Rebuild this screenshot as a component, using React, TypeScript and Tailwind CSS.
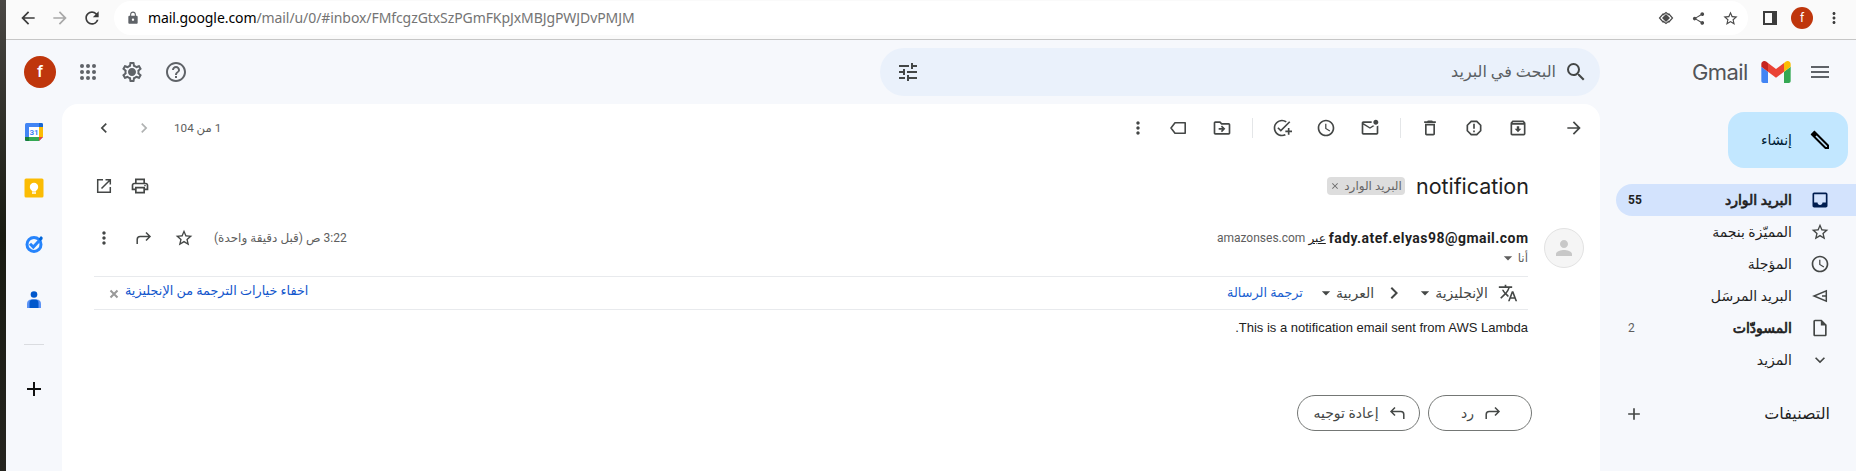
import React from 'react';
import {
  MdArrowBack, MdArrowForward, MdRefresh, MdLock, MdOutlineSettings, MdHelpOutline, MdTune, MdSearch,
  MdMenu, MdInbox, MdStarBorder, MdAccessTime, MdOutlineInsertDriveFile, MdKeyboardArrowDown, MdAdd,
  MdMoreVert, MdOutlinePrint, MdTranslate, MdArrowDropDown, MdPerson, MdShare,
  MdOutlineArchive, MdOutlineDelete, MdAddTask, MdOutlineDriveFileMove, MdOutlineMarkEmailUnread,
  MdReportGmailerrorred, MdChevronLeft, MdChevronRight, MdClose,
} from 'react-icons/md';

type SlotProps = { w: string; children: React.ReactNode };

function Slot({ w, children }: SlotProps) {
  return <div className={`${w} flex shrink-0 items-center justify-center`}>{children}</div>;
}

function ArrowTurn({ className }: { className: string }) {
  return (
    <svg viewBox="0 0 20 20" className={className} fill="none" stroke="currentColor" strokeWidth="1.5">
      <path d="M3.200 16V11.500Q3.200 8.500 6.200 8.500H16M12 4.500L16 8.500L12 12.500" />
    </svg>
  );
}

function LabelIcon() {
  return (
    <svg viewBox="0 0 20 20" className="size-5" fill="none" stroke="currentColor" strokeWidth="1.6" strokeLinejoin="round">
      <path d="M7 4.8H17.2V15.2H7L3 10Z" />
    </svg>
  );
}

function OpenIcon() {
  return (
    <svg viewBox="0 0 20 20" className="size-5" fill="none" stroke="currentColor" strokeWidth="1.500">
      <path d="M9 3.700H3.700V16.300H16.300V11M11.500 3.700H16.300V8.500M16.300 3.700L7.500 12.500" />
    </svg>
  );
}

function GmailLogo() {
  return (
    <svg viewBox="52 42 88 66" className="h-[22px] w-[30px]">
      <path fill="#4285f4" d="M58 108h14V74L52 59v43c0 3.32 2.69 6 6 6" />
      <path fill="#34a853" d="M120 108h14c3.32 0 6-2.69 6-6V59l-20 15" />
      <path fill="#fbbc04" d="M120 48v26l20-15v-8c0-7.42-8.47-11.65-14.4-7.2" />
      <path fill="#ea4335" d="M72 74V48l24 18 24-18v26L96 92" />
      <path fill="#c5221f" d="M52 51v8l20 15V48l-5.6-4.2c-5.94-4.45-14.4-.22-14.4 7.2" />
    </svg>
  );
}

function BrowserBar() {
  return (
    <div className="flex h-10 shrink-0 border-b border-[#c6c6c6] bg-[#fafafa] pb-[2px] text-[#3c3c3c]">
      <div className="flex h-9 w-[108px] items-center pl-[6px]">
        <Slot w="w-8"><MdArrowBack className="size-5" /></Slot>
        <Slot w="w-8"><MdArrowForward className="size-5 text-[#a8a8a8]" /></Slot>
        <Slot w="w-8"><MdRefresh className="size-5" /></Slot>
      </div>
      <div className="mt-px flex h-[34px] w-[1634px] items-center rounded-full bg-white">
        <div className="ml-[11px] flex w-[15px] justify-center"><MdLock className="size-[14px] text-[#5f6368]" /></div>
        <div className="-mt-px ml-[8px] whitespace-nowrap font-['Noto_Sans',sans-serif] text-[14px] tracking-[-0.08px] text-[#747474]">
          <span className="text-black">mail.google.com</span>/mail/u/0/#inbox/FMfcgzGtxSzPGmFKpJxMBJgPWJDvPMJM
        </div>
        <div className="ml-auto flex pr-[2px] text-[#4a4a4a]">
          <Slot w="w-8">
            <svg viewBox="0 0 16 16" className="size-4" fill="none" stroke="currentColor" strokeWidth="1.200">
              <path d="M5.500 3.500L1.500 8l4 4.500M10.500 3.500L14.500 8l-4 4.500" />
              <path d="M8 4L12 8L8 12L4 8Z" fill="currentColor" stroke="none" />
              <path d="M5 5L8 2.500L11 5M5 11L8 13.500L11 11" />
            </svg>
          </Slot>
          <Slot w="w-8"><MdShare className="size-[15px]" /></Slot>
          <Slot w="w-8"><MdStarBorder className="size-[17px]" /></Slot>
        </div>
      </div>
      <div className="flex h-9 items-center pl-[6px]">
        <Slot w="w-8"><div className="h-[14px] w-[14px] border-2 border-r-[5px] border-[#3c3c3c]" /></Slot>
        <Slot w="w-8"><div className="flex size-[22px] items-center justify-center rounded-full bg-[#bf360c] font-['Roboto',sans-serif] text-[12px] text-white">f</div></Slot>
        <Slot w="w-8"><MdMoreVert className="size-[18px]" /></Slot>
      </div>
    </div>
  );
}

function Header() {
  return (
    <header className="flex h-16 shrink-0 items-center text-[#5f6368]">
      <div className="flex items-center pl-3">
        <Slot w="w-11"><div className="flex size-8 items-center justify-center rounded-full bg-[#bf360c] font-['Roboto',sans-serif] text-[17px] font-medium text-white">f</div></Slot>
        <div className="ml-1 flex">
          <Slot w="w-11">
            <svg viewBox="0 0 24 24" className="size-6" fill="currentColor">
              {[6, 12, 18].map((y) => [6, 12, 18].map((x) => <circle key={`${x}-${y}`} cx={x} cy={y} r="2" />))}
            </svg>
          </Slot>
          <Slot w="w-11">
            <span className="grid place-items-center">
              <MdOutlineSettings className="col-start-1 row-start-1 size-6" />
              <span className="col-start-1 row-start-1 size-[6px] rounded-full bg-[#5f6368]" />
            </span>
          </Slot>
          <Slot w="w-11"><MdHelpOutline className="size-6" /></Slot>
        </div>
      </div>
      <div className="ml-auto flex h-12 w-[720px] items-center justify-between rounded-3xl bg-[#eaf1fb] px-3 text-[#444746]">
        <div className="flex w-8 justify-center"><MdTune className="size-6" /></div>
        <div className="flex items-center">
          <div dir="rtl" className="mr-[8px] text-[16px] leading-6 text-[#5b5f63]">البحث في البريد</div>
          <MdSearch className="size-6" />
        </div>
      </div>
      <div className="flex w-64 items-center pl-[92px]">
        <div className="w-[57px] whitespace-nowrap font-['Inter',sans-serif] text-[22px] leading-6 tracking-[-0.6px] text-[#525458]">Gmail</div>
        <div className="ml-3"><GmailLogo /></div>
        <div className="ml-[17px]"><MdMenu className="size-6" /></div>
      </div>
    </header>
  );
}

function Rail() {
  return (
    <aside className="flex w-14 shrink-0 flex-col items-center pt-[18px]">
      <svg viewBox="0 0 20 20" className="size-5">
        <rect x="1" y="1" width="18" height="18" rx="1.500" fill="#4285f4" />
        <path d="M15 5h4v10h-4z" fill="#fbbc04" />
        <path d="M15 1h2.500A1.500 1.500 0 0 1 19 2.500V5h-4z" fill="#1967d2" />
        <path d="M5 15h10v4H5z" fill="#34a853" />
        <path d="M1 15h4v4H2.500A1.500 1.500 0 0 1 1 17.500z" fill="#188038" />
        <path d="M19 15v4h-4z" fill="#f6f8fc" />
        <path d="M15 15h4l-4 4z" fill="#ea4335" />
        <path d="M5 5h10v10H5z" fill="#fff" />
        <text x="10" y="13" textAnchor="middle" fontSize="8" fontWeight="700" fontFamily="Roboto, sans-serif" fill="#4285f4">31</text>
      </svg>
      <svg viewBox="0 0 20 20" className="mt-9 size-5">
        <rect x=".5" y=".5" width="19" height="19" rx="1.500" fill="#fbbc04" />
        <circle cx="10" cy="9" r="4.200" fill="#fff" />
        <path d="M8 11h4v2.500H8zM8 14.200h4v1.500H8z" fill="#fff" />
      </svg>
      <svg viewBox="0 0 20 20" className="mt-9 size-5">
        <circle cx="10" cy="10.400" r="7" fill="none" stroke="#2684fc" strokeWidth="3" />
        <path d="M6 9.700L9.300 13L17.500 4.300" fill="none" stroke="#2684fc" strokeWidth="3" />
        <path d="M14.500 5L17 2L19 4L16.500 7Z" fill="#0066da" />
      </svg>
      <svg viewBox="0 0 20 20" className="mt-9 size-5">
        <circle cx="10" cy="4.500" r="3.300" fill="#0057cc" />
        <path d="M3 18v-4q0-4.500 4.500-4.500h5q4.500 0 4.500 4.500v4z" fill="#5c93f5" />
        <path d="M5.500 18v-5q0-3.500 3-3.500h3q3 0 3 3.500v5z" fill="#0057cc" />
      </svg>
      <div className="mt-[34px] h-px w-5 bg-[#dadce0]" />
      <div className="mt-8 text-[#111]"><MdAdd className="size-6" /></div>
    </aside>
  );
}

function Toolbar() {
  return (
    <div className="flex h-12 items-center text-[#444746]">
      <div className="flex items-center pl-[22px]">
        <Slot w="w-10"><MdChevronLeft className="size-5" /></Slot>
        <Slot w="w-10"><MdChevronRight className="size-5 text-[#b0b2b2]" /></Slot>
      </div>
      <div dir="rtl" className="ml-[10px] mt-px whitespace-nowrap text-[11.7px] text-[#5e5e5e]">1 من 104</div>
      <div className="ml-auto flex items-center pr-1">
        <Slot w="w-9"><MdMoreVert className="size-5" /></Slot>
        <Slot w="w-11"><LabelIcon /></Slot>
        <Slot w="w-11"><MdOutlineDriveFileMove className="size-5" /></Slot>
        <div className="ml-2 h-5 w-px bg-[#e4e6e8]" />
        <div className="ml-[7px] flex">
          <Slot w="w-11"><MdAddTask className="size-5" /></Slot>
          <Slot w="w-11"><MdAccessTime className="size-5" /></Slot>
          <Slot w="w-11"><MdOutlineMarkEmailUnread className="size-5" /></Slot>
        </div>
        <div className="ml-2 h-5 w-px bg-[#e4e6e8]" />
        <div className="ml-[7px] flex">
          <Slot w="w-11"><MdOutlineDelete className="size-5" /></Slot>
          <Slot w="w-11"><MdReportGmailerrorred className="size-5" /></Slot>
          <Slot w="w-11"><MdOutlineArchive className="size-5" /></Slot>
        </div>
        <div className="ml-3"><Slot w="w-11"><MdArrowForward className="size-5" /></Slot></div>
      </div>
    </div>
  );
}

function Message() {
  return (
    <section className="text-[#444746]">
      <div className="mt-[14px] flex h-10 items-center pl-6 pr-[72px]">
        <Slot w="w-9"><OpenIcon /></Slot>
        <Slot w="w-9"><MdOutlinePrint className="size-5" /></Slot>
        <div dir="rtl" className="ml-auto flex h-[18px] w-[78px] items-center justify-center gap-1 whitespace-nowrap rounded bg-[#ddd] text-[12px] text-[#666]">
          <span>البريد الوارد</span><MdClose className="size-[10px]" />
        </div>
        <div className="ml-[11px] w-[112px] whitespace-nowrap text-right font-['Inter',sans-serif] text-[21.500px] leading-7 tracking-[-0.05px] text-[#1f1f1f]">notification</div>
      </div>

      <div className="mt-[22px] flex h-10 items-start pl-[22px] pr-4">
        <div className="flex h-5 items-center">
          <Slot w="w-10"><MdMoreVert className="size-5" /></Slot>
          <Slot w="w-10"><ArrowTurn className="size-5" /></Slot>
          <Slot w="w-10"><MdStarBorder className="size-5" /></Slot>
          <div dir="rtl" className="ml-[10px] whitespace-nowrap text-[12px] text-[#5e5e5e]">3:22 ص (قبل دقيقة واحدة)</div>
        </div>
        <div className="ml-auto mr-4 text-[#5e5e5e]">
          <div className="flex h-5 items-center gap-[3px] whitespace-nowrap text-[12px]">
            <span className="font-['Roboto',sans-serif]">amazonses.com</span>
            <span dir="rtl" className="text-[#222] underline">عبر</span>
            <span className="-mr-[0.5px] font-['Roboto',sans-serif] text-[14px] font-bold tracking-[0.46px] text-[#1f1f1f]">fady.atef.elyas98@gmail.com</span>
          </div>
          <div className="flex h-5 items-center justify-end text-[12px]">
            <MdArrowDropDown className="size-5" /><span dir="rtl">أنا</span>
          </div>
        </div>
        <div className="flex size-10 items-center justify-center rounded-full border border-[#e2e2e2] bg-[#f5f5f5] text-[#c8c8c8]">
          <MdPerson className="size-6" />
        </div>
      </div>

      <div className="ml-8 mr-[72px] mt-2 flex h-[34px] items-center border-y border-[#e8eaed] text-[12.8px]">
        <svg viewBox="0 0 10 10" className="ml-[15px] mt-[2px] size-[10px]" fill="none" stroke="#999" strokeWidth="2">
          <path d="M1.500 1.500L8.500 8.500M8.500 1.500L1.500 8.500" />
        </svg>
        <div dir="rtl" className="-mt-1 ml-[6px] whitespace-nowrap text-[#1155cc]">اخفاء خيارات الترجمة من الإنجليزية</div>
        <div className="ml-auto flex items-center whitespace-nowrap pr-[10px]">
          <span dir="rtl" className="text-[#1a5fd0]">ترجمة الرسالة</span>
          <MdArrowDropDown className="ml-[13px] size-5" />
          <span dir="rtl" className="text-[14px]">العربية</span>
          <MdChevronRight className="ml-[8px] mr-[7px] size-6" />
          <MdArrowDropDown className="ml-[2px] size-5" />
          <span dir="rtl" className="text-[14px]">الإنجليزية</span>
          <MdTranslate className="ml-[10px] size-5" />
        </div>
      </div>

      <div dir="rtl" className="ml-8 mr-[72px] mt-[9px] font-['Liberation_Sans',sans-serif] text-[13px] leading-[18px] text-[#222]">
        This is a notification email sent from AWS Lambda.
      </div>

      <div className="mr-[68px] mt-[58px] flex justify-end gap-2 text-[14px]">
        <button className="flex h-9 w-[123px] items-center justify-center gap-[8px] rounded-full border border-[#747775] pl-[3px]">
          <span dir="rtl">إعادة توجيه</span><ArrowTurn className="size-5 -scale-x-100" />
        </button>
        <button className="flex h-9 w-[104px] items-center justify-center gap-[9px] rounded-full border border-[#747775] pl-[4px]">
          <span dir="rtl">رد</span><ArrowTurn className="size-5" />
        </button>
      </div>
    </section>
  );
}

const folders = [
  { label: 'البريد الوارد', count: '55', icon: <MdInbox className="size-5 text-[#001d4f]" />, row: 'bg-[#d3e3fd] text-[#001d35]', text: '[-webkit-text-stroke:0.7px_currentColor]' },
  { label: 'المميّزة بنجمة', count: '', icon: <MdStarBorder className="size-5" />, row: '', text: '' },
  { label: 'المؤجلة', count: '', icon: <MdAccessTime className="size-5" />, row: '', text: '' },
  {
    label: 'البريد المرسَل', count: '', row: '', text: '',
    icon: (
      <svg viewBox="0 0 20 20" className="size-5" fill="none" stroke="currentColor" strokeWidth="1.500">
        <path d="M16.300 4.800V15.200L4 10ZM16.500 10H12" />
      </svg>
    ),
  },
  { label: 'المسودّات', count: '2', icon: <MdOutlineInsertDriveFile className="size-5" />, row: '', text: '[-webkit-text-stroke:0.7px_currentColor]' },
  { label: 'المزيد', count: '', icon: <MdKeyboardArrowDown className="size-5" />, row: '', text: '' },
];

function Sidebar() {
  return (
    <nav className="flex w-64 shrink-0 flex-col items-end pt-2">
      <div className="mr-2 flex h-14 w-[120px] items-center justify-end rounded-2xl bg-[#c2e7ff] pr-[16px] text-[14px] text-[#001d35]">
        <span dir="rtl">إنشاء</span>
        <svg viewBox="0 0 24 24" className="ml-4 size-6" fill="none" stroke="#000" strokeWidth="2">
          <path d="M4 6.500L17.500 20H20V17.500L6.500 4Z" />
          <path d="M3 6.200L6.200 3L9.500 6.500L6.500 9.500Z" fill="#000" stroke="none" />
        </svg>
      </div>
      <div className="mt-4 w-60">
        {folders.map((f) => (
          <div key={f.label} className={`flex h-8 items-center rounded-l-full pl-3 pr-[26px] text-[14px] text-[#1f1f1f] ${f.row}`}>
            <span className={f.count === '2' ? "font-['Roboto',sans-serif] text-[12px] text-[#5e5e5e]" : "font-['Roboto',sans-serif] text-[12px] font-bold"}>{f.count}</span>
            <span dir="rtl" className={`ml-auto whitespace-nowrap ${f.text}`}>{f.label}</span>
            <span className="ml-[18px] text-[#444746]">{f.icon}</span>
          </div>
        ))}
      </div>
      <div className="mt-5 flex h-9 w-60 items-center justify-between pl-2 pr-[26px] text-[16px] text-[#1f1f1f]">
        <MdAdd className="size-5 text-[#444746]" />
        <span dir="rtl">التصنيفات</span>
      </div>
    </nav>
  );
}

export default function App() {
  return (
    <div className="flex h-[471px] w-[1856px] overflow-hidden bg-[#f6f8fc] font-['Roboto','DejaVu_Sans',sans-serif]">
      <div className="w-[6px] shrink-0 bg-linear-to-b from-[#4a4744] via-[#191b12] to-[#25241f]" />
      <div className="flex min-w-0 flex-1 flex-col">
        <BrowserBar />
        <Header />
        <div className="flex flex-1">
          <Rail />
          <main className="flex-1 rounded-t-2xl bg-white">
            <Toolbar />
            <Message />
          </main>
          <Sidebar />
        </div>
      </div>
    </div>
  );
}
